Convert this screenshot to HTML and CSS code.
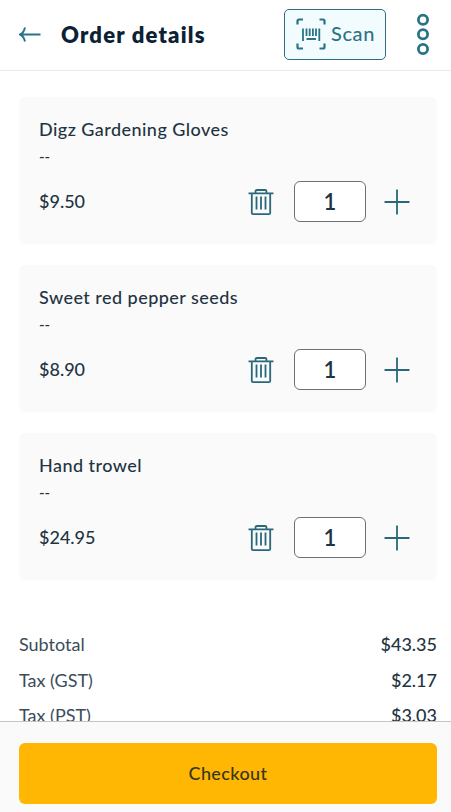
FILE: index.html
```html
<!DOCTYPE html>
<html lang="en">
<head>
    <meta charset="UTF-8">
    <meta name="viewport" content="width=device-width, initial-scale=1.0">
    <title>Order details</title>
    <link rel="stylesheet" href="styles.css">
</head>
<body>
    <!-- Shared icons -->
    <svg class="sprite" width="0" height="0" aria-hidden="true">
        <symbol id="trash" viewBox="0 0 26 28">
            <path d="M0.5 5.300H25.500M3.800 5.300V25Q3.800 26.200 5 26.200H21Q22.200 26.200 22.200 25V5.300M7.500 5V3.500Q7.500 2 9 2H17Q18.500 2 18.500 3.500V5" stroke-width="1.8"/>
            <path d="M8.500 8.500V21.500M13 8.500V21.500M17.500 8.500V21.500" stroke-width="1.8"/>
        </symbol>
        <symbol id="plus" viewBox="0 0 26 26">
            <path d="M13 0.5V25.5M0.5 13H25.5" stroke-width="1.8"/>
        </symbol>
    </svg>
    <header class="header">
        <a href="#" class="back" aria-label="Back">
            <svg class="icon" width="22" height="18" viewBox="0 0 22 18">
                <path d="M21.500 9.500H1M6 2.500C5.200 6 3.500 8.500 1 9.500C3.500 10.500 5.200 13 6 16.500" stroke-width="1.9"/>
            </svg>
        </a>
        <h1>Order details</h1>
        <button class="scan">
            <svg class="icon" width="30" height="32" viewBox="0 0 30 32">
                <path d="M1.500 6.500V3Q1.500 1.500 3 1.500H7M23.500 1.500H27Q28.500 1.500 28.500 3V6.500M1.500 25.500V29Q1.500 30.500 3 30.500H7M23.500 30.500H27Q28.500 30.500 28.500 29V25.500" stroke-width="2.200"/>
                <path d="M7 10.500V23M10.500 10.500V18M13.700 10.500V18M16.900 10.500V18M20 10.500V18M23.300 10.500V23M10.500 21H20" stroke-width="1.8"/>
            </svg>
            <span>Scan</span>
        </button>
        <button class="more" aria-label="More">
            <svg class="icon" width="14" height="44" viewBox="0 0 14 44">
                <g stroke-width="2.800">
                    <circle cx="7" cy="7.700" r="4.600"/>
                    <circle cx="7" cy="22.300" r="4.600"/>
                    <circle cx="7" cy="37" r="4.600"/>
                </g>
            </svg>
        </button>
    </header>
    <main class="content">
        <section class="items">
            <div class="item">
                <h2>Digz Gardening Gloves</h2>
                <p class="variant">--</p>
                <div class="item-row">
                    <span class="price">$9.50</span>
                    <button class="icon-btn" aria-label="Remove"><svg class="icon" width="26" height="28"><use href="#trash"/></svg></button>
                    <span class="qty">1</span>
                    <button class="icon-btn" aria-label="Add"><svg class="icon" width="26" height="26"><use href="#plus"/></svg></button>
                </div>
            </div>
            <div class="item">
                <h2>Sweet red pepper seeds</h2>
                <p class="variant">--</p>
                <div class="item-row">
                    <span class="price">$8.90</span>
                    <button class="icon-btn" aria-label="Remove"><svg class="icon" width="26" height="28"><use href="#trash"/></svg></button>
                    <span class="qty">1</span>
                    <button class="icon-btn" aria-label="Add"><svg class="icon" width="26" height="26"><use href="#plus"/></svg></button>
                </div>
            </div>
            <div class="item">
                <h2>Hand trowel</h2>
                <p class="variant">--</p>
                <div class="item-row">
                    <span class="price">$24.95</span>
                    <button class="icon-btn" aria-label="Remove"><svg class="icon" width="26" height="28"><use href="#trash"/></svg></button>
                    <span class="qty">1</span>
                    <button class="icon-btn" aria-label="Add"><svg class="icon" width="26" height="26"><use href="#plus"/></svg></button>
                </div>
            </div>
        </section>
        <dl class="totals">
            <div class="total-row">
                <dt>Subtotal</dt>
                <dd>$43.35</dd>
            </div>
            <div class="total-row">
                <dt>Tax (GST)</dt>
                <dd>$2.17</dd>
            </div>
            <div class="total-row">
                <dt>Tax (PST)</dt>
                <dd>$3.03</dd>
            </div>
        </dl>
    </main>
    <footer class="footer">
        <button class="checkout">Checkout</button>
    </footer>
</body>
</html>
```
FILE: styles.css
```css
* {
    box-sizing: border-box;
}
body {
    display: flex;
    flex-direction: column;
    height: 100vh;
    margin: 0;
    overflow: hidden;
    font-family: Lato, "Liberation Sans", sans-serif;
    font-size: 18px;
    font-weight: 500;
    color: #1f3443;
    background-color: #fff;
}
h1, h2, p, dl, dd {
    margin: 0;
}
button {
    padding: 0;
    border: none;
    background: none;
    font: inherit;
    cursor: pointer;
}
.sprite {
    position: absolute;
}
.icon {
    display: block;
    fill: none;
    stroke: #287486;
}
.header {
    display: flex;
    align-items: center;
    flex: none;
    height: 71px;
    padding: 0 21px 2px 19px;
    border-bottom: 1px solid #ebebeb;
}
.header h1 {
    margin-left: 20px;
    padding-top: 1px;
    font-size: 22px;
    line-height: 30px;
    font-weight: 800;
    letter-spacing: 1.2px;
    color: #0b2135;
}
.scan {
    display: flex;
    align-items: center;
    gap: 5px;
    width: 102px;
    height: 51px;
    margin-left: auto;
    padding-left: 11px;
    border: 1px solid #2f6f80;
    border-radius: 5px;
    background-color: #f2fbfe;
    color: #2d7485;
    font-size: 20px;
    letter-spacing: 0.6px;
}
.scan span {
    padding-bottom: 2px;
}
.more {
    margin-left: 30px;
}
.content {
    flex: 1;
    min-height: 0;
    overflow: hidden;
    padding: 26px 14px 0 19px;
}
.items {
    display: flex;
    flex-direction: column;
    gap: 21px;
}
.item {
    height: 147px;
    padding: 20px 27px 0 20px;
    border-radius: 6px;
    background-color: #fafafa;
}
.item h2 {
    font-size: 18px;
    line-height: 24px;
    font-weight: 500;
    letter-spacing: 0.45px;
}
.variant {
    padding-top: 1px;
    font-size: 15px;
    line-height: 28px;
}
.item-row {
    display: flex;
    align-items: center;
    height: 63px;
}
.item-row .icon {
    stroke: #29687a;
}
.price {
    margin-right: auto;
    padding-bottom: 1px;
}
.qty {
    width: 72px;
    height: 41px;
    margin: 0 18px 0 20px;
    border: 1px solid #707070;
    border-radius: 6px;
    background-color: #fff;
    font-size: 22px;
    line-height: 39px;
    font-weight: 600;
    text-align: center;
}
.totals {
    padding-top: 47px;
}
.total-row {
    display: flex;
    justify-content: space-between;
    line-height: 35.5px;
}
.total-row dt {
    font-weight: 400;
    color: #3b4c5a;
}
.footer {
    flex: none;
    height: 91px;
    padding: 21px 14px 0 19px;
    border-top: 1px solid #c4c4c4;
    background-color: #fafafa;
}
.checkout {
    display: block;
    width: 100%;
    height: 61px;
    padding-bottom: 2px;
    border-radius: 6px;
    background-color: #ffb703;
    color: #38351d;
    letter-spacing: 0.4px;
}
```
